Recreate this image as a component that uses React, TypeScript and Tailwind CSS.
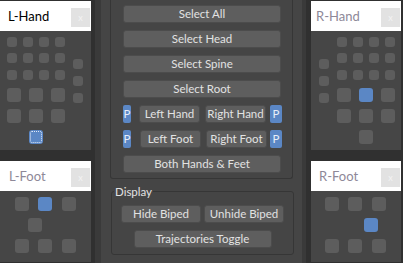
import React from "react"

type Pad = { x: number; y: number; s: number; on?: boolean; focus?: boolean }

const font = { fontFamily: "Lato, 'Liberation Sans', sans-serif" }

const row = (xs: number[], y: number, s: number): Pad[] => xs.map((x) => ({ x, y, s }))

const lHand: Pad[] = [
  ...row([7, 23, 39, 55], 6, 10),
  ...row([7, 23, 39, 55], 22, 10),
  ...row([7, 23, 39, 55], 39, 10),
  ...row([73], 28, 10),
  ...row([73], 45, 10),
  ...row([73], 62, 10),
  ...row([7, 29, 51], 57, 14),
  ...row([7, 29, 51], 78, 14),
  { x: 29, y: 99, s: 14, on: true, focus: true },
]

const rHand: Pad[] = [
  ...row([26, 42, 58, 74], 6, 10),
  ...row([26, 42, 58, 74], 22, 10),
  ...row([26, 42, 58, 74], 39, 10),
  ...row([8], 28, 10),
  ...row([8], 45, 10),
  ...row([8], 62, 10),
  { x: 26, y: 57, s: 14 },
  { x: 48, y: 57, s: 14, on: true },
  { x: 70, y: 57, s: 14 },
  ...row([26, 48, 70], 78, 14),
  { x: 48, y: 99, s: 14 },
]

const lFoot: Pad[] = [
  { x: 15, y: 6, s: 14 },
  { x: 38, y: 6, s: 14, on: true },
  { x: 62, y: 6, s: 14 },
  { x: 28, y: 27, s: 14 },
  ...row([15, 38, 62], 48, 14),
]

const rFoot: Pad[] = [
  ...row([14, 37, 61], 6, 14),
  { x: 53, y: 27, s: 14, on: true },
  ...row([14, 37, 61], 48, 14),
]

const Panel = ({
  title,
  active,
  pads,
  bodyH,
  textX,
}: {
  title: string
  active?: boolean
  pads: Pad[]
  bodyH: number
  textX: number
}) => (
  <div className="flex flex-col">
    <div className="flex h-[30px] items-start bg-white">
      <span
        className={`mt-[6px] text-[13px] leading-[18px] ${active ? "text-black" : "text-[#8e8898]"}`}
        style={{ ...font, paddingLeft: textX }}
      >
        {title}
      </span>
      <div className="ml-auto mr-[1px] mt-[7px] flex h-[19px] w-[19px] items-center justify-center bg-[#e2e2e2] text-[9px] leading-none text-[#f4f4f4]">
        x
      </div>
    </div>
    <div className="relative bg-[#464646]" style={{ height: bodyH }}>
      {pads.map((p, i) => (
        <div
          key={i}
          className={`absolute rounded-[3px] ${p.on ? "bg-[#5b87c5]" : "bg-[#5d5d5d]"}`}
          style={{ left: p.x, top: p.y, width: p.s, height: p.s }}
        >
          {p.focus && <div className="absolute inset-[1px] rounded-[2px] border border-dotted border-[#dfe8f6]" />}
        </div>
      ))}
    </div>
  </div>
)

const Btn = ({ label, w }: { label: string; w: number }) => (
  <div
    className="flex h-[18px] shrink-0 items-center justify-center rounded-[3px] border border-[#4c4c4c] bg-[#5e5e5e] text-[11.5px] leading-none text-[#e2e2e2]"
    style={{ width: w }}
  >
    {label}
  </div>
)

const P = ({ w, ml }: { w: number; ml?: number }) => (
  <div
    className="flex h-[18px] shrink-0 items-center justify-center rounded-[2px] bg-[#5b87c5] text-[11.5px] leading-none text-[#e8eef8]"
    style={{ width: w, marginLeft: ml }}
  >
    P
  </div>
)

export default function App() {
  return (
    <div className="flex h-[263px] w-[403px] overflow-hidden bg-[#303030]" style={font}>
      {/* LEFT */}
      <div className="flex w-[91px] flex-col pt-[1px]">
        <Panel title="L-Hand" active pads={lHand} bodyH={119} textX={8} />
        <div className="h-[11px]" />
        <Panel title="L-Foot" pads={lFoot} bodyH={71} textX={9} />
      </div>

      <div className="w-[4px]" />
      <div className="w-[6px] bg-[#3a3a3a]" />

      {/* CENTER */}
      <div className="flex w-[201px] flex-col bg-[#454545]">
        <div className="ml-[9px] flex w-[183px] flex-col items-start gap-[7px] rounded-b-[3px] border-x border-b border-[#363636] pb-[5px] pl-[12px] pt-[5px]">
          <Btn label="Select All" w={158} />
          <Btn label="Select Head" w={158} />
          <Btn label="Select Spine" w={158} />
          <Btn label="Select Root" w={158} />
          <div className="flex">
            <P w={8} />
            <div className="ml-[8px]"><Btn label="Left Hand" w={61} /></div>
            <div className="ml-[5px]"><Btn label="Right Hand" w={61} /></div>
            <P w={12} ml={4} />
          </div>
          <div className="flex">
            <P w={8} />
            <div className="ml-[9px]"><Btn label="Left Foot" w={61} /></div>
            <div className="ml-[5px]"><Btn label="Right Foot" w={61} /></div>
            <P w={12} ml={3} />
          </div>
          <Btn label="Both Hands & Feet" w={158} />
        </div>

        <div className="relative ml-[10px] mt-[12px] flex w-[183px] flex-col items-center gap-[7px] rounded-[3px] border border-[#363636] pb-[6px] pt-[13px]">
          <span className="absolute left-[2px] top-[-7px] bg-[#454545] px-[1px] text-[11.5px] leading-[14px] text-[#e2e2e2]">
            Display
          </span>
          <div className="flex gap-[3px]">
            <Btn label="Hide Biped" w={80} />
            <Btn label="Unhide Biped" w={80} />
          </div>
          <Btn label="Trajectories Toggle" w={138} />
        </div>
      </div>

      <div className="w-[4px] bg-[#3a3a3a]" />
      <div className="w-[5px]" />

      {/* RIGHT */}
      <div className="flex w-[90px] flex-col pt-[1px]">
        <Panel title="R-Hand" pads={rHand} bodyH={119} textX={5} />
        <div className="h-[11px]" />
        <Panel title="R-Foot" pads={rFoot} bodyH={71} textX={8} />
      </div>
    </div>
  )
}
